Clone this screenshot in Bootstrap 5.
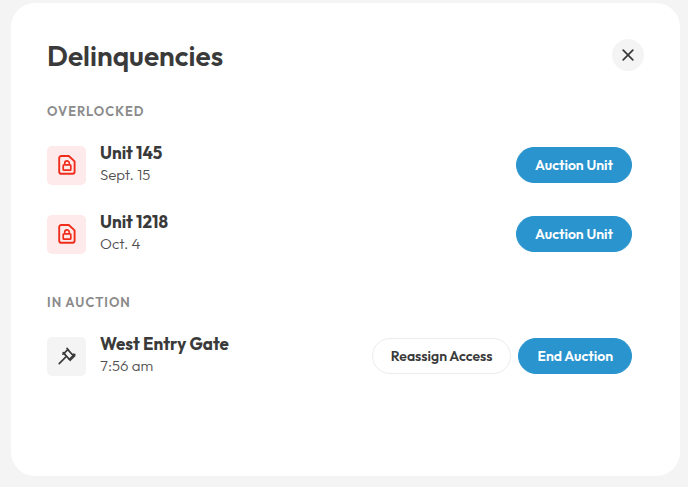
<!DOCTYPE html>
<html lang="en">
<head>
<meta charset="utf-8">
<meta name="viewport" content="width=device-width, initial-scale=1">
<title>Delinquencies</title>
<link href="https://cdn.jsdelivr.net/npm/bootstrap@5.3.0/dist/css/bootstrap.min.css" rel="stylesheet">
<style>
body { background: #f4f4f4; color: #3a3a3a; font-family: Outfit, Lato, sans-serif; }
.page { padding: 3px 8px 11px 11px; }
.panel { border-radius: 24px; padding: 36px; }
.panel-title { font-size: 28px; line-height: 34px; font-weight: 600; }
.close-btn { width: 32px; height: 32px; background: #f4f4f4; color: #3a3a3a; }
.group-label { font-size: 13px; line-height: 16px; font-weight: 600; letter-spacing: 1px; color: #8a8a8a; margin: 30px 0 24px; }
.group-label.later { margin-top: 38px; }
.units { gap: 25px; }
.unit { gap: 14px; padding-right: 12px; }
.tile { width: 39px; height: 39px; border-radius: 5px; background: #f4f4f4; }
.tile-alert { background: #feeaea; color: #f02d1a; }
.unit-name { font-size: 17px; line-height: 20px; font-weight: 700; }
.unit-time { font-size: 15px; line-height: 24px; font-weight: 300; color: #505050; }
.pill { height: 36px; padding: 0 18px; font-size: 14px; line-height: 20px; font-weight: 600; }
.pill-blue { --bs-btn-color: #fff; --bs-btn-bg: #2994ce; --bs-btn-border-color: #2994ce; --bs-btn-hover-color: #fff; --bs-btn-hover-bg: #2283b8; }
.pill-plain { --bs-btn-color: #3a3a3a; --bs-btn-bg: #fff; --bs-btn-border-color: #ececec; --bs-btn-hover-bg: #f4f4f4; }
.actions { gap: 7px; }
</style>
<script src="https://cdn.jsdelivr.net/npm/bootstrap@5.3.0/dist/js/bootstrap.bundle.min.js" defer></script>
</head>
<body>
<main class="page d-flex min-vh-100">
  <section class="panel bg-white flex-grow-1" aria-labelledby="title">
    <header class="d-flex justify-content-between align-items-start">
      <h1 class="panel-title mb-0" id="title">Delinquencies</h1>
      <button type="button" class="close-btn btn rounded-circle border-0 p-0 d-flex align-items-center justify-content-center" aria-label="Close">
        <svg width="12" height="12" viewBox="0 0 12 12" fill="none" stroke="currentColor" stroke-width="1.7" stroke-linecap="round"><path d="M1.2 1.2l9.6 9.6M10.8 1.2l-9.6 9.6"/></svg>
      </button>
    </header>

    <h2 class="group-label text-uppercase">Overlocked</h2>
    <ul class="units list-unstyled d-flex flex-column mb-0">
      <li class="unit d-flex align-items-center">
        <span class="tile tile-alert d-flex align-items-center justify-content-center flex-shrink-0">
          <svg width="18" height="20" viewBox="0 0 18 20" fill="none" stroke="currentColor" stroke-width="1.9" stroke-linejoin="round"><path d="M3.2 1h7.6L16.6 6.4v10.4a2 2 0 0 1-2 2H3.2a2 2 0 0 1-2-2V3a2 2 0 0 1 2-2z"/><rect x="5.2" y="9.8" width="7.6" height="5.4" rx=".8" stroke-width="1.7"/><path d="M6.7 9.6V8.2a2.3 2.3 0 0 1 4.6 0v1.4" stroke-width="1.6"/></svg>
        </span>
        <div class="flex-grow-1">
          <div class="unit-name">Unit 145</div>
          <div class="unit-time">Sept. 15</div>
        </div>
        <button type="button" class="pill pill-blue btn rounded-pill">Auction Unit</button>
      </li>
      <li class="unit d-flex align-items-center">
        <span class="tile tile-alert d-flex align-items-center justify-content-center flex-shrink-0">
          <svg width="18" height="20" viewBox="0 0 18 20" fill="none" stroke="currentColor" stroke-width="1.9" stroke-linejoin="round"><path d="M3.2 1h7.6L16.6 6.4v10.4a2 2 0 0 1-2 2H3.2a2 2 0 0 1-2-2V3a2 2 0 0 1 2-2z"/><rect x="5.2" y="9.8" width="7.6" height="5.4" rx=".8" stroke-width="1.7"/><path d="M6.7 9.6V8.2a2.3 2.3 0 0 1 4.6 0v1.4" stroke-width="1.6"/></svg>
        </span>
        <div class="flex-grow-1">
          <div class="unit-name">Unit 1218</div>
          <div class="unit-time">Oct. 4</div>
        </div>
        <button type="button" class="pill pill-blue btn rounded-pill">Auction Unit</button>
      </li>
    </ul>

    <h2 class="group-label later text-uppercase">In Auction</h2>
    <ul class="units list-unstyled d-flex flex-column mb-0">
      <li class="unit d-flex align-items-center">
        <span class="tile d-flex align-items-center justify-content-center flex-shrink-0">
          <svg width="18" height="18" viewBox="0 0 18 18" fill="none" stroke="currentColor" stroke-width="1.6" stroke-linecap="round" stroke-linejoin="round"><path d="M1.2 16.6l7.2-7.2"/><path d="M6 6.4L9.8 2.6l5.4 6-3.8 3.8z"/><path d="M4.9 7.2l1.1-.8M5.2 5.6l1.6 1.8M9 1.4l1.6 1.8M15.2 8.6l1.6-1.2M10.8 11.8l1.4 1.5 4.6-4.6-1.4-1.5"/></svg>
        </span>
        <div class="flex-grow-1">
          <div class="unit-name">West Entry Gate</div>
          <div class="unit-time">7:56 am</div>
        </div>
        <div class="actions d-flex">
          <button type="button" class="pill pill-plain btn rounded-pill">Reassign Access</button>
          <button type="button" class="pill pill-blue btn rounded-pill">End Auction</button>
        </div>
      </li>
    </ul>
  </section>
</main>
</body>
</html>
